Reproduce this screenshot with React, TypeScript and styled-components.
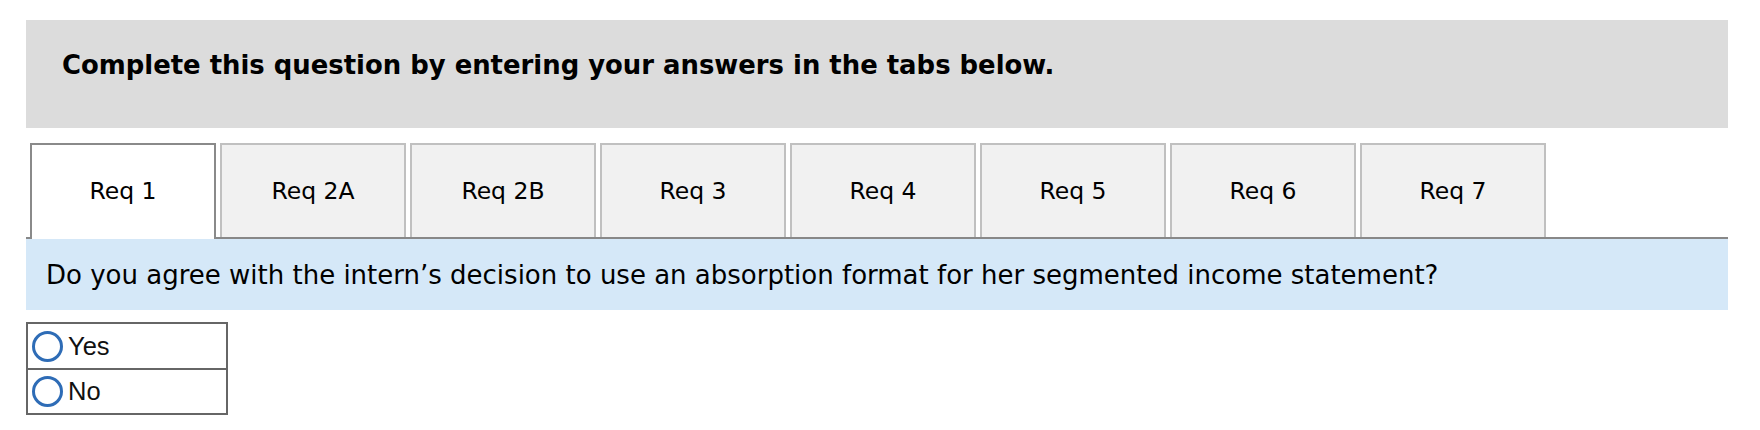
import React, { useState } from "react";
import styled, { createGlobalStyle } from "styled-components";

const GlobalStyle = createGlobalStyle`
  html, body {
    margin: 0;
    padding: 0;
    background: #ffffff;
  }
  body {
    font-family: "DejaVu Sans", Verdana, sans-serif;
    color: #000000;
  }
`;

const Page = styled.div`
  padding: 20px 32px 0 26px;
  width: 1702px;
`;

const Banner = styled.div`
  box-sizing: border-box;
  height: 108px;
  background: #dcdcdc;
  padding: 30px 36px 0 36px;
  font-family: "DejaVu Sans", Verdana, sans-serif;
  font-weight: bold;
  font-size: 25.9px;
  line-height: 30px;
  color: #000;
`;

const TabBar = styled.div`
  display: flex;
  gap: 4px;
  margin-top: 15px;
  padding-left: 4px;
  border-bottom: 2px solid #888888;
  height: 94px;
`;

const Tab = styled.button<{ $active?: boolean }>`
  box-sizing: border-box;
  width: 186px;
  height: ${(p) => (p.$active ? "96px" : "94px")};
  margin-bottom: ${(p) => (p.$active ? "-2px" : "0")};
  border: 2px solid ${(p) => (p.$active ? "#8a8a8a" : "#c0c0c0")};
  border-bottom: none;
  background: ${(p) => (p.$active ? "#ffffff" : "#f1f1f1")};
  font-family: "DejaVu Sans", Verdana, sans-serif;
  font-size: 23.5px;
  color: #000;
  display: flex;
  align-items: center;
  justify-content: center;
  padding: 0 0 ${(p) => (p.$active ? "2px" : "0")} 0;
  cursor: pointer;
`;

const Question = styled.div`
  box-sizing: border-box;
  height: 71px;
  background: #d5e8f8;
  display: flex;
  align-items: center;
  padding-left: 20px;
  font-family: "DejaVu Sans", Verdana, sans-serif;
  font-size: 26px;
  color: #000;
`;

const Choices = styled.div`
  box-sizing: border-box;
  margin-top: 12px;
  width: 202px;
  border: 2px solid #666666;
  display: flex;
  flex-direction: column;
`;

const Choice = styled.label<{ $first?: boolean }>`
  box-sizing: border-box;
  height: ${(p) => (p.$first ? "44px" : "45px")};
  display: flex;
  align-items: center;
  gap: 5px;
  padding-left: 4px;
  border-top: ${(p) => (p.$first ? "none" : "2px solid #666666")};
  font-family: "Liberation Sans", Arial, sans-serif;
  font-size: 25.5px;
  color: #111;
  cursor: pointer;
`;

const Radio = styled.span<{ $checked?: boolean }>`
  box-sizing: border-box;
  width: 31px;
  height: 31px;
  border-radius: 50%;
  border: 3.5px solid #2e6cb6;
  background: #fff;
  display: flex;
  align-items: center;
  justify-content: center;
  flex-shrink: 0;
  &::after {
    content: "";
    width: 13px;
    height: 13px;
    border-radius: 50%;
    background: #2e6cb6;
    display: ${(p) => (p.$checked ? "block" : "none")};
  }
`;

const tabs = ["Req 1", "Req 2A", "Req 2B", "Req 3", "Req 4", "Req 5", "Req 6", "Req 7"];

export default function App() {
  const [active, setActive] = useState(0);
  const [answer, setAnswer] = useState<string | null>(null);
  return (
    <>
      <GlobalStyle />
      <Page>
        <Banner>Complete this question by entering your answers in the tabs below.</Banner>
        <TabBar>
          {tabs.map((t, i) => (
            <Tab key={t} $active={i === active} onClick={() => setActive(i)}>
              {t}
            </Tab>
          ))}
        </TabBar>
        <Question>
          Do you agree with the intern’s decision to use an absorption format for her segmented income statement?
        </Question>
        <Choices>
          {["Yes", "No"].map((c, i) => (
            <Choice key={c} $first={i === 0} onClick={() => setAnswer(c)}>
              <Radio $checked={answer === c} />
              {c}
            </Choice>
          ))}
        </Choices>
      </Page>
    </>
  );
}
